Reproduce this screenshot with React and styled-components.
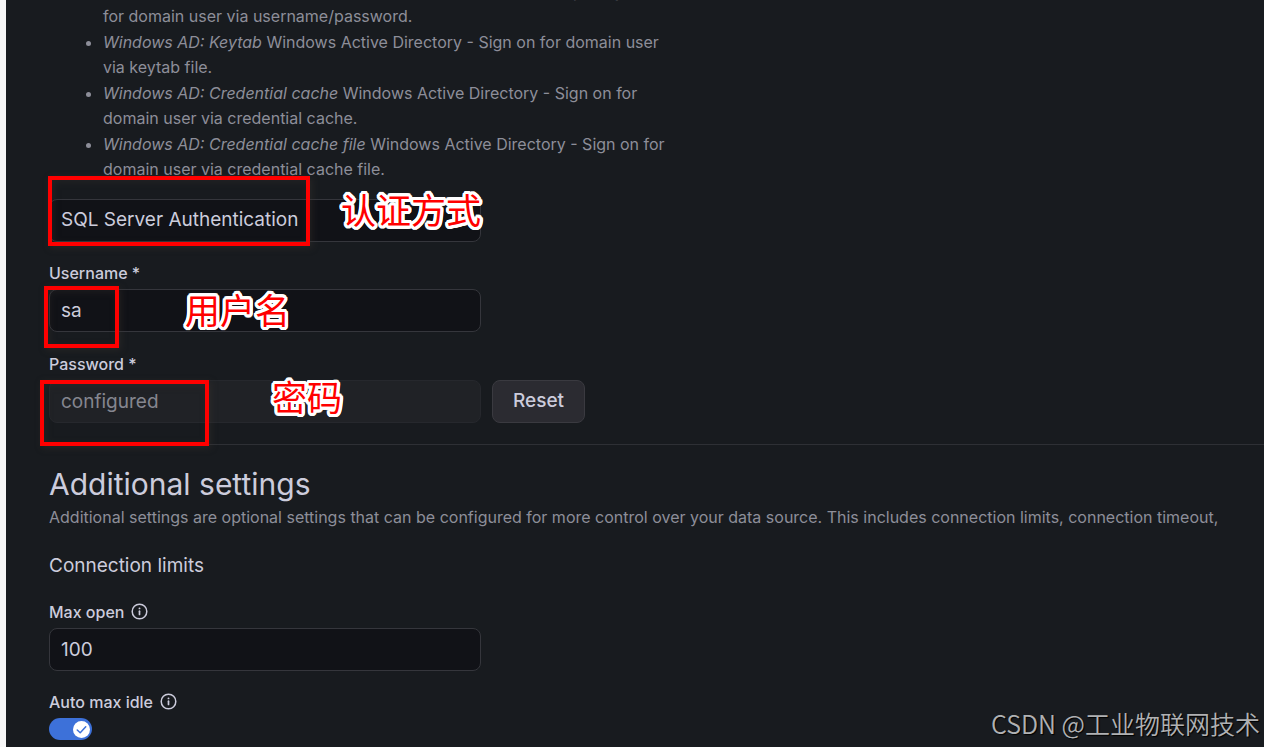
import React from 'react';
import styled, { createGlobalStyle } from 'styled-components';

const GlobalStyle = createGlobalStyle`
  *, *::before, *::after { box-sizing: border-box; }
  html, body, #root { height: 100%; }
  body {
    margin: 0;
    overflow: hidden;
    background: #181b1f;
    color: #ccccdc;
    font-family: Inter, 'Noto Sans CJK SC', sans-serif;
    font-size: 16px;
    line-height: 25px;
  }
`;

const Page = styled.main`
  position: relative;
  height: 100%;
  overflow: hidden;
  border-left: 6px solid #f7f7f7;
  padding-left: 43px;
`;

const MethodList = styled.ul`
  max-width: 618px;
  margin: -21px 0 17px;
  padding: 0 0 0 54px;
  color: #8d8e99;
`;

const Method = styled.li`
  margin-bottom: 1px;
`;

const Field = styled.div`
  position: relative;
  margin-bottom: ${(p) => p.$gap || 19}px;
`;

const LabelRow = styled.div`
  display: flex;
  align-items: center;
  gap: 7px;
  height: 28px;
  padding-bottom: 3px;
`;

const Label = styled.label`
  font-weight: 500;
`;

const ControlRow = styled.div`
  display: flex;
  gap: 11px;
`;

const controlStyle = `
  display: block;
  width: 432px;
  max-width: 100%;
  height: 43px;
  padding: 0 11px 1px;
  border: 1px solid #35363c;
  border-radius: 8px;
  background: #111217;
  color: #ccccdc;
  font-family: inherit;
  font-size: 19px;
  line-height: 25px;
  outline: none;
`;

const Input = styled.input`
  ${controlStyle}
  &:disabled {
    background: #202226;
    border-color: #26282d;
    color: #85868f;
  }
`;

const Select = styled.select`
  ${controlStyle}
  padding-bottom: 3px;
  appearance: none;
`;

const Button = styled.button`
  height: 43px;
  padding: 0 20px 2px;
  border: 1px solid #3a3a40;
  border-radius: 8px;
  background: #2b2b31;
  color: #ccccdc;
  font: 500 19px/25px Inter, sans-serif;
`;

const Divider = styled.hr`
  height: 1px;
  margin: 0 0 20px;
  border: 0;
  background: #2e3035;
`;

const Title = styled.h3`
  margin: 0;
  font-size: 30px;
  font-weight: 400;
  line-height: 38px;
`;

const Description = styled.p`
  margin: 2px 0 22px;
  color: #8d8e99;
  white-space: nowrap;
`;

const Subtitle = styled.h4`
  margin: 0 0 21px;
  font-size: 19px;
  font-weight: 400;
  line-height: 27px;
`;

const Switch = styled.label`
  display: flex;
  justify-content: flex-end;
  align-items: center;
  width: 43px;
  height: 22px;
  padding: 2px;
  border-radius: 11px;
  background: #3d71d9;
  input {
    position: absolute;
    opacity: 0;
    margin: 0;
  }
`;

const Highlight = styled.div`
  position: absolute;
  top: ${(p) => p.$top}px;
  left: ${(p) => p.$left}px;
  width: ${(p) => p.$width}px;
  height: ${(p) => p.$height}px;
  border: 4px solid #ff0000;
  box-shadow: 2px 2px 7px rgba(60, 54, 50, 0.4), inset 2px 2px 7px rgba(60, 54, 50, 0.3);
  pointer-events: none;
`;

/* Round white outline, built from a ring of hard shadows. */
const outline = Array.from({ length: 24 }, (_, i) => {
  const angle = (i * Math.PI) / 12;
  return `${(Math.cos(angle) * 3).toFixed(2)}px ${(Math.sin(angle) * 3).toFixed(2)}px 0 #ffffff`;
}).join(', ');

const Note = styled.span`
  position: absolute;
  top: ${(p) => p.$top}px;
  left: ${(p) => p.$left}px;
  color: #ff0000;
  font-family: 'Noto Sans CJK SC', sans-serif;
  font-size: 35px;
  font-weight: 400;
  line-height: 42px;
  white-space: nowrap;
  text-shadow: ${outline};
  pointer-events: none;
`;

const Watermark = styled.div`
  position: absolute;
  right: 4px;
  bottom: 6px;
  color: #b0b1b3;
  font-family: 'Noto Sans CJK SC', sans-serif;
  font-size: 25px;
  font-weight: 350;
  line-height: 36px;
  text-shadow: 1px 1px 1px #000000;
`;

const InfoGlyph = styled.svg`
  width: 17px;
  height: 17px;
  margin-bottom: 2px;
`;

const InfoIcon = () => (
  <InfoGlyph viewBox="0 0 17 17" fill="none" stroke="currentColor" aria-hidden="true">
    <circle cx="8.5" cy="8.5" r="7.3" strokeWidth="1.5" />
    <path d="M8.5 8.2v3.3" strokeWidth="1.7" strokeLinecap="round" />
    <circle cx="8.5" cy="5.4" r="0.95" fill="currentColor" stroke="none" />
  </InfoGlyph>
);

const SwitchKnob = () => (
  <svg width="17" height="17" viewBox="0 0 16 16" fill="none" aria-hidden="true">
    <circle cx="8" cy="8" r="8" fill="#fff" />
    <path d="M4 8.4 6.8 11 12 5.4" stroke="#3d71d9" strokeWidth="1.4" strokeLinecap="round" strokeLinejoin="round" />
  </svg>
);

export default function App() {
  return (
    <Page>
      <GlobalStyle />
      <MethodList>
        <Method>
          <em>Windows AD: Username + password</em> Windows Active Directory - Sign on for domain user via
          username/password.
        </Method>
        <Method>
          <em>Windows AD: Keytab</em> Windows Active Directory - Sign on for domain user via keytab file.
        </Method>
        <Method>
          <em>Windows AD: Credential cache</em> Windows Active Directory - Sign on for domain user via credential
          cache.
        </Method>
        <Method>
          <em>Windows AD: Credential cache file</em> Windows Active Directory - Sign on for domain user via
          credential cache file.
        </Method>
      </MethodList>

      <Field>
        <Select aria-label="Authentication type" defaultValue="sql">
          <option value="sql">SQL Server Authentication</option>
        </Select>
        <Highlight $top={-23} $left={-1} $width={262} $height={70} />
        <Note $top={-11} $left={292}>认证方式</Note>
      </Field>

      <Field $gap={20}>
        <LabelRow>
          <Label htmlFor="username">Username *</Label>
        </LabelRow>
        <Input id="username" type="text" defaultValue="sa" />
        <Highlight $top={25} $left={-5} $width={75} $height={62} />
        <Note $top={27} $left={136}>用户名</Note>
      </Field>

      <Field $gap={21}>
        <LabelRow>
          <Label htmlFor="password">Password *</Label>
        </LabelRow>
        <ControlRow>
          <Input id="password" type="text" defaultValue="configured" disabled />
          <Button type="button">Reset</Button>
        </ControlRow>
        <Highlight $top={28} $left={-9} $width={169} $height={66} />
        <Note $top={23} $left={223}>密码</Note>
      </Field>

      <Divider />

      <Title>Additional settings</Title>
      <Description>
        Additional settings are optional settings that can be configured for more control over your data source. This
        includes connection limits, connection timeout,
      </Description>

      <Subtitle>Connection limits</Subtitle>

      <Field>
        <LabelRow>
          <Label htmlFor="max-open">Max open</Label>
          <InfoIcon />
        </LabelRow>
        <Input id="max-open" type="text" inputMode="numeric" defaultValue="100" />
      </Field>

      <Field>
        <LabelRow>
          <Label htmlFor="auto-idle">Auto max idle</Label>
          <InfoIcon />
        </LabelRow>
        <Switch>
          <input id="auto-idle" type="checkbox" role="switch" defaultChecked />
          <SwitchKnob />
        </Switch>
      </Field>

      <Watermark>CSDN @工业物联网技术</Watermark>
    </Page>
  );
}
